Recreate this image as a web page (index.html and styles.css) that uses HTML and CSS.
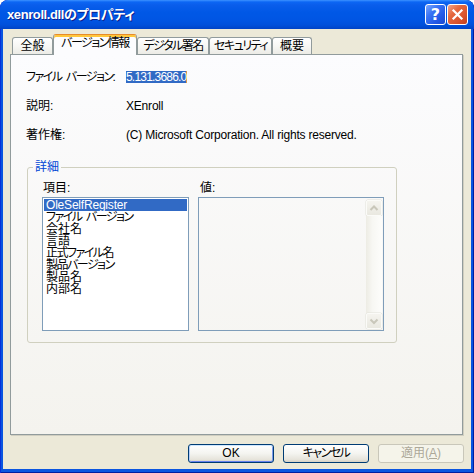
FILE: index.html
```html
<!DOCTYPE html>
<html lang="ja">
<head>
<meta charset="utf-8">
<title>xenroll.dllのプロパティ</title>
<link rel="stylesheet" href="styles.css">
</head>
<body>
<div class="window">
  <div class="titlebar">
    <span class="title">xenroll.dllのプロパティ</span>
    <div class="caption-buttons">
      <div class="cap cap-help">?</div>
      <div class="cap cap-close">
        <svg width="19" height="19" viewBox="0 0 19 19"><path d="M5.5 5.5 L13.5 13.5 M13.5 5.5 L5.5 13.5" stroke="#fff" stroke-width="2.2" stroke-linecap="square" fill="none"/></svg>
      </div>
    </div>
  </div>
  <div class="client">
    <div class="tabs">
      <div class="tab tab-general">全般</div>
      <div class="tab tab-version selected kana">バージョン情報</div>
      <div class="tab tab-sign kana">デジタル署名</div>
      <div class="tab tab-security kana">セキュリティ</div>
      <div class="tab tab-summary">概要</div>
    </div>
    <div class="panel">
      <div class="info">
        <div class="info-row"><span class="info-label kana">ファイル バージョン:</span><span class="info-value"><span class="sel">5.131.3686.0</span></span></div>
        <div class="info-row"><span class="info-label">説明:</span><span class="info-value">XEnroll</span></div>
        <div class="info-row"><span class="info-label">著作権:</span><span class="info-value">(C) Microsoft Corporation. All rights reserved.</span></div>
      </div>
      <fieldset class="group">
        <legend>詳細</legend>
        <div class="cols">
          <div class="col col-items">
            <div class="col-label">項目:</div>
            <ul class="listbox">
              <li class="active">OleSelfRegister</li>
              <li class="kana">ファイル バージョン</li>
              <li>会社名</li>
              <li>言語</li>
              <li class="kana">正式ファイル名</li>
              <li class="kana">製品バージョン</li>
              <li>製品名</li>
              <li>内部名</li>
            </ul>
          </div>
          <div class="col col-value">
            <div class="col-label">値:</div>
            <div class="valuebox">
              <div class="scrollbar">
                <div class="sb-btn"><svg width="14" height="14" viewBox="0 0 14 14"><path d="M3.5 9 L7 5.5 L10.5 9" stroke="#C9C7BA" stroke-width="2" fill="none"/></svg></div>
                <div class="sb-track"></div>
                <div class="sb-btn"><svg width="14" height="14" viewBox="0 0 14 14"><path d="M3.5 5.5 L7 9 L10.5 5.5" stroke="#C9C7BA" stroke-width="2" fill="none"/></svg></div>
              </div>
            </div>
          </div>
        </div>
      </fieldset>
    </div>
    <div class="buttons">
      <div class="btn btn-default">OK</div>
      <div class="btn kana">キャンセル</div>
      <div class="btn btn-disabled">適用(<u>A</u>)</div>
    </div>
  </div>
</div>
</body>
</html>
```
FILE: styles.css
```css
* { box-sizing: border-box; }
html, body { margin: 0; padding: 0; background: #ffffff; }
body {
  font-family: "Liberation Sans", "Noto Sans CJK JP", sans-serif;
  font-size: 12px;
  font-feature-settings: "palt" 1;
  color: #000;
}
.kana { letter-spacing: -1.5px; word-spacing: 2.5px; }
.window {
  width: 474px;
  height: 473px;
  display: flex;
  flex-direction: column;
  background: #0A55E0;
  border-radius: 8px 8px 0 0;
  overflow: hidden;
  box-shadow: inset 1px 0 0 #0831D9, inset -1px 0 0 #001EA0, inset 0 -1px 0 #001EA0;
}
.titlebar {
  height: 29px;
  flex: none;
  display: flex;
  align-items: flex-start;
  padding: 0 6px 0 7px;
  border-radius: 8px 8px 0 0;
  background: linear-gradient(to bottom, #3D92FF 0px, #0C66F4 2px, #0A5DEB 5px, #0058E6 12px, #0055E3 20px, #0050DB 25px, #0043C6 29px);
}
.title {
  flex: 1;
  margin-top: 7px;
  color: #fff;
  font-weight: bold;
  font-size: 13px;
  line-height: 16px;
  letter-spacing: -0.4px;
  text-shadow: 1px 1px 0 #0A1E8C;
  white-space: nowrap;
}
.caption-buttons {
  display: flex;
  gap: 1px;
  margin-top: 4px;
}
.cap {
  width: 21px;
  height: 21px;
  border: 1px solid #fff;
  border-radius: 3px;
  display: flex;
  align-items: center;
  justify-content: center;
  color: #fff;
}
.cap-help {
  background: linear-gradient(135deg, #7BA7FF 0%, #3A74F4 35%, #2258E6 70%, #1B49D0 100%);
  font-family: "DejaVu Sans", sans-serif;
  font-weight: bold;
  font-size: 16px;
  line-height: 19px;
}
.cap-close {
  background: linear-gradient(135deg, #F2A58A 0%, #E5683F 35%, #D9532D 70%, #C23F1C 100%);
}
.client {
  flex: 1;
  margin: 0 3px 4px 3px;
  background: #ECE9D8;
  padding: 5px 8px 0 7px;
  display: flex;
  flex-direction: column;
}
.tabs {
  height: 20px;
  display: flex;
  align-items: flex-end;
  padding-left: 2px;
}
.tab {
  height: 17px;
  border: 1px solid #919B9C;
  border-bottom: none;
  border-radius: 3px 3px 0 0;
  background: linear-gradient(to bottom, #FFFFFF 0%, #F7F7F4 50%, #ECEBE6 100%);
  text-align: center;
  line-height: 16px;
  white-space: nowrap;
}
.tab-general { width: 41px; }
.tab-version { width: 84px; }
.tab-sign { width: 72px; }
.tab-security { width: 63px; }
.tab-summary { width: 40px; }
.tab.selected {
  height: 21px;
  margin-bottom: -1px;
  position: relative;
  z-index: 1;
  background: #FCFCFE;
  border-top: 1px solid #E68B2C;
  box-shadow: inset 0 2px 0 #FFC73C;
  line-height: 17px;
}
.panel {
  height: 381px;
  flex: none;
  border: 1px solid #919B9C;
  background: linear-gradient(to bottom, #FCFCFE 0%, #F4F3EE 100%);
  box-shadow: 1px 1px 0 #D0CEC0;
  padding: 15px 15px 0 15px;
}
.info {
  display: flex;
  flex-direction: column;
  gap: 15px;
}
.info-row {
  display: flex;
  height: 14px;
  line-height: 14px;
  white-space: nowrap;
}
.info-label { width: 100px; flex: none; }
.info-value { letter-spacing: -0.2px; }
.sel {
  display: inline-block;
  height: 12px;
  line-height: 12px;
  margin-top: 1px;
  vertical-align: top;
  background: #316AC5;
  color: #fff;
  border-right: 1px solid #D89A4C;
  letter-spacing: -0.8px;
}
.group {
  width: 370px;
  margin: 18px 0 0 1px;
  padding: 7px 12px 11px 14px;
  border: 1px solid #D0D0BF;
  border-radius: 3px;
  min-width: 0;
}
.group legend {
  color: #0046D5;
  padding: 0 2px;
  margin-left: -9px;
  line-height: 14px;
}
.cols {
  display: flex;
  gap: 9px;
}
.col-items { width: 147px; flex: none; }
.col-value { width: 186px; flex: none; }
.col-label {
  line-height: 14px;
  height: 14px;
  margin-bottom: 2px;
  padding-left: 1px;
}
.col-value .col-label { padding-left: 2px; }
.listbox {
  list-style: none;
  margin: 0;
  height: 134px;
  border: 1px solid #7F9DB9;
  background: #fff;
  padding: 1px;
}
.listbox li {
  height: 12px;
  line-height: 12px;
  padding-left: 2px;
  white-space: nowrap;
}
.listbox li.active {
  background: #316AC5;
  color: #fff;
  letter-spacing: -0.2px;
}
.valuebox {
  height: 134px;
  border: 1px solid #7F9DB9;
  padding: 1px 1px 1px 0;
  display: flex;
  justify-content: flex-end;
}
.scrollbar {
  width: 16px;
  display: flex;
  flex-direction: column;
  margin-top: 1px;
}
.sb-btn {
  height: 16px;
  flex: none;
  border: 1px solid #FBFBF8;
  border-radius: 2px;
  background: linear-gradient(to bottom, #F5F4EF, #E9E8E0);
  box-shadow: 0 0 0 0.5px #E2E1DA;
  display: flex;
  align-items: center;
  justify-content: center;
}
.sb-track {
  flex: 1;
  background: linear-gradient(to right, #EDECE4 0%, #F7F7F3 40%, #FDFDFB 100%);
}
.buttons {
  display: flex;
  justify-content: flex-end;
  gap: 9px;
  margin: 9px -1px 0 0;
}
.btn {
  width: 86px;
  height: 19px;
  border: 1px solid #003C74;
  border-radius: 3px;
  background: linear-gradient(to bottom, #FFFFFF 0%, #F4F4F0 50%, #E6E4DB 85%, #D6D0C5 100%);
  text-align: center;
  line-height: 17px;
  white-space: nowrap;
}
.btn-default {
  box-shadow: inset 0 1px 0 #CEE7FF, inset 1px 0 0 #B6CFF8, inset -1px 0 0 #7C9BEA, inset 0 -1px 0 #6982EE;
}
.btn-disabled {
  border-color: #C9C7BA;
  background: #F5F4EA;
  color: #ACA899;
}
.btn-disabled u { text-decoration-color: #ACA899; }
```
